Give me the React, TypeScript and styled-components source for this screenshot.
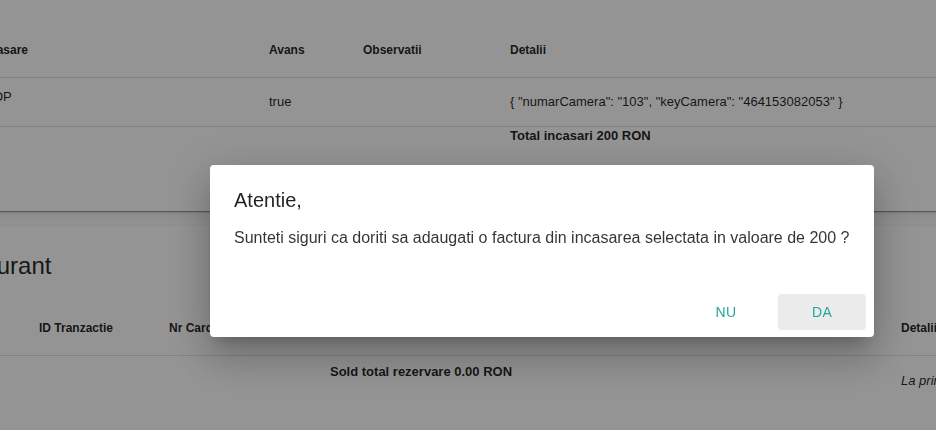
import React from "react";
import styled, { createGlobalStyle } from "styled-components";

const GlobalStyle = createGlobalStyle`
  html, body {
    margin: 0;
    padding: 0;
    background: #fafafa;
    overflow: hidden;
  }
  body {
    font-family: "Liberation Sans", Arial, sans-serif;
    color: rgba(0, 0, 0, 0.87);
  }
  * { box-sizing: border-box; }
`;

const Page = styled.div`
  width: 1120px;
  margin-left: -82px;
  display: flex;
  flex-direction: column;
`;

const Card = styled.section<{ $top: number; $padTop: number; $height?: number }>`
  background: #ffffff;
  margin-top: ${(p) => p.$top}px;
  padding-top: ${(p) => p.$padTop}px;
  height: ${(p) => (p.$height ? `${p.$height}px` : "auto")};
  min-height: ${(p) => (p.$height ? 0 : 260)}px;
  box-shadow: 0 2px 1px -1px rgba(0, 0, 0, 0.2), 0 1px 1px 0 rgba(0, 0, 0, 0.14),
    0 1px 3px 0 rgba(0, 0, 0, 0.12), 0 6px 10px -4px rgba(0, 0, 0, 0.08);
`;

const SectionTitle = styled.h2`
  margin: 0;
  padding: 0 16px;
  font-size: 24px;
  font-weight: 400;
  line-height: 32px;
  color: rgba(0, 0, 0, 0.87);
`;

const Row = styled.div<{ $cols: string; $height: number; $divider?: boolean; $mt?: number }>`
  display: grid;
  grid-template-columns: ${(p) => p.$cols};
  height: ${(p) => p.$height}px;
  margin-top: ${(p) => p.$mt ?? 0}px;
  border-bottom: ${(p) => (p.$divider ? "1px solid #e0e0e0" : "none")};
`;

const HeadCell = styled.div`
  display: flex;
  align-items: center;
  padding: 0 16px;
  font-size: 12px;
  font-weight: 700;
  line-height: 18px;
  white-space: nowrap;
`;

const Cell = styled.div<{ $align?: "top" | "center"; $pad?: number; $bold?: boolean; $italic?: boolean; $span?: number }>`
  display: flex;
  align-items: ${(p) => (p.$align === "top" ? "flex-start" : "center")};
  padding: ${(p) => p.$pad ?? 0}px 16px 0;
  font-size: 13px;
  line-height: 18px;
  font-weight: ${(p) => (p.$bold ? 700 : 400)};
  font-style: ${(p) => (p.$italic ? "italic" : "normal")};
  white-space: nowrap;
  grid-column: ${(p) => (p.$span ? `span ${p.$span}` : "auto")};
`;

const Backdrop = styled.div`
  position: fixed;
  inset: 0;
  background: rgba(0, 0, 0, 0.42);
  display: flex;
  align-items: flex-start;
  padding: 165px 0 0 210px;
`;

const Dialog = styled.div`
  width: 664px;
  background: #ffffff;
  border-radius: 4px;
  box-shadow: 0 11px 15px -7px rgba(0, 0, 0, 0.2), 0 24px 38px 3px rgba(0, 0, 0, 0.14),
    0 9px 46px 8px rgba(0, 0, 0, 0.12);
  display: flex;
  flex-direction: column;
`;

const DialogTitle = styled.h3`
  margin: 0;
  padding: 19px 24px 10px;
  font-size: 20px;
  font-weight: 400;
  line-height: 32px;
  color: rgba(0, 0, 0, 0.87);
`;

const DialogText = styled.p`
  margin: 0;
  padding: 0 24px 36px;
  font-size: 16px;
  line-height: 24px;
  color: rgba(0, 0, 0, 0.8);
`;

const Actions = styled.div`
  display: flex;
  justify-content: flex-end;
  gap: 8px;
  padding: 8px 8px 7px;
`;

const Button = styled.button<{ $active?: boolean }>`
  min-width: 88px;
  height: 36px;
  border: none;
  border-radius: 4px;
  background: ${(p) => (p.$active ? "#ebebeb" : "transparent")};
  color: #26a69a;
  font-family: "Liberation Sans", Arial, sans-serif;
  font-size: 14px;
  letter-spacing: 0.4px;
  text-transform: uppercase;
  cursor: pointer;
`;

const incasariCols = "335px 94px 147px 1fr";
const plataCols = "105px 130px 161px 180px 196px 195px 1fr";

export default function App() {
  return (
    <>
      <GlobalStyle />
      <Page>
        <Card $top={-20} $padTop={42} $height={231}>
          <Row $cols={incasariCols} $height={56} $divider>
            <HeadCell>Metoda incasare</HeadCell>
            <HeadCell>Avans</HeadCell>
            <HeadCell>Observatii</HeadCell>
            <HeadCell>Detalii</HeadCell>
          </Row>
          <Row $cols={incasariCols} $height={49} $divider>
            <Cell $align="top" $pad={10}>Virament: OP</Cell>
            <Cell>true</Cell>
            <Cell />
            <Cell>{'{ "numarCamera": "103", "keyCamera": "464153082053" }'}</Cell>
          </Row>
          <Row $cols={incasariCols} $height={20}>
            <Cell />
            <Cell />
            <Cell />
            <Cell $align="top" $bold>Total incasari 200 RON</Cell>
          </Row>
        </Card>

        <Card $top={15} $padTop={24}>
          <SectionTitle>Restaurant</SectionTitle>
          <Row $cols={plataCols} $height={56} $divider $mt={18}>
            <HeadCell>Data</HeadCell>
            <HeadCell>ID Tranzactie</HeadCell>
            <HeadCell>Nr Card</HeadCell>
            <HeadCell>Suma</HeadCell>
            <HeadCell>Status</HeadCell>
            <HeadCell>Data plata</HeadCell>
            <HeadCell>Detalii</HeadCell>
          </Row>
          <Row $cols={plataCols} $height={49}>
            <Cell />
            <Cell />
            <Cell />
            <Cell $align="top" $pad={7} $bold $span={3}>Sold total rezervare 0.00 RON</Cell>
            <Cell $italic>La primirea platii</Cell>
          </Row>
        </Card>
      </Page>

      <Backdrop>
        <Dialog role="dialog">
          <DialogTitle>Atentie,</DialogTitle>
          <DialogText>
            Sunteti siguri ca doriti sa adaugati o factura din incasarea selectata in valoare de 200 ?
          </DialogText>
          <Actions>
            <Button>Nu</Button>
            <Button $active>Da</Button>
          </Actions>
        </Dialog>
      </Backdrop>
    </>
  );
}
